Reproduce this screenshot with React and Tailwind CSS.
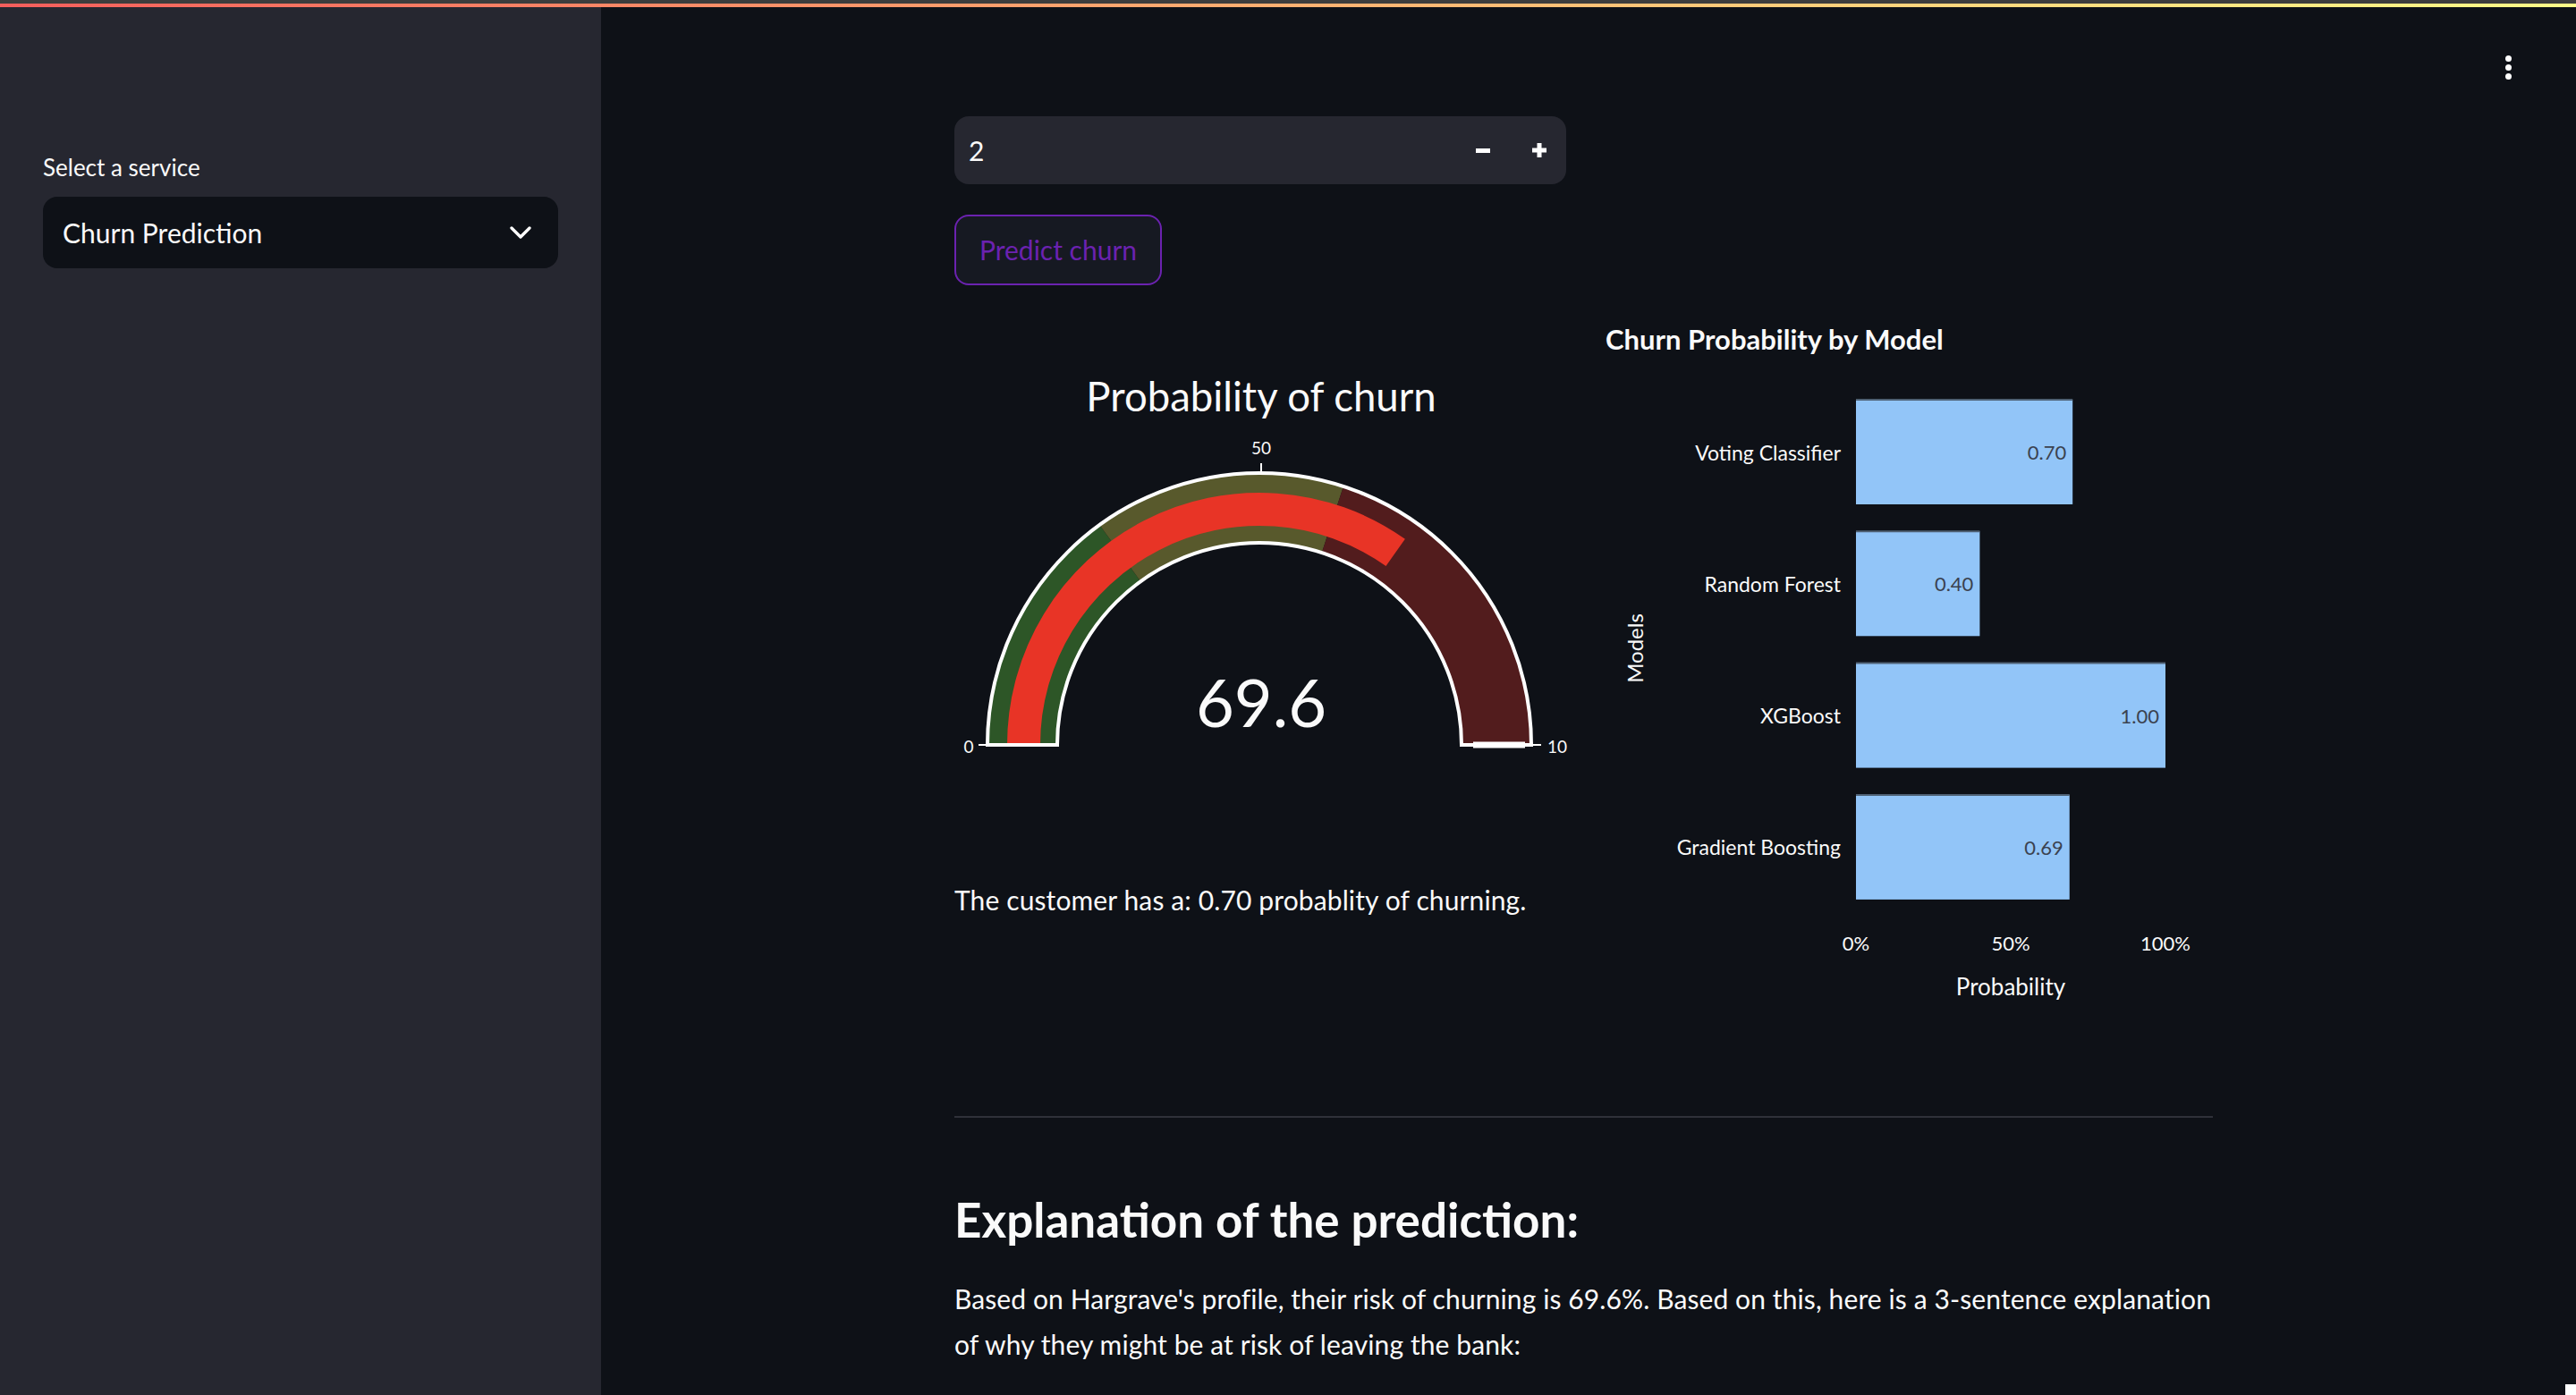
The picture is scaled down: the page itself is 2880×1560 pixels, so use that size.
import { ChevronDown } from "lucide-react";

const MODELS = [
  ["Voting Classifier", 0.7],
  ["Random Forest", 0.4],
  ["XGBoost", 1.0],
  ["Gradient Boosting", 0.69],
];

// gauge geometry (svg units = screen px)
const CX = 341;
const CY = 482;

function pt(v, r) {
  const a = Math.PI * (1 - v / 100);
  return [CX + r * Math.cos(a), CY - r * Math.sin(a)];
}

function band(v0, v1, r0, r1) {
  const [x0, y0] = pt(v0, r1);
  const [x1, y1] = pt(v1, r1);
  const [x2, y2] = pt(v1, r0);
  const [x3, y3] = pt(v0, r0);
  return `M${x0} ${y0} A${r1} ${r1} 0 0 1 ${x1} ${y1} L${x2} ${y2} A${r0} ${r0} 0 0 0 ${x3} ${y3} Z`;
}

function Gauge({ value }) {
  const [tx0, ty0] = pt(100, 239);
  const [tx1, ty1] = pt(100, 297);
  return (
    <svg width="688" height="600" viewBox="0 0 688 600" className="block">
      <text x="343" y="109" textAnchor="middle" fontSize="45.5" fill="#fafafa">
        Probability of churn
      </text>
      <path d={band(0, 30, 226, 304)} fill="#2d5627" />
      <path d={band(30, 60, 226, 304)} fill="#58592c" />
      <path d={band(60, 100, 226, 304)} fill="#521c1d" />
      <path d={band(0, value, 245, 282)} fill="#e83426" />
      <path d={band(0, 100, 226, 304)} fill="none" stroke="#ffffff" strokeWidth="4" />
      <line x1={tx0} y1={ty0} x2={tx1} y2={ty1} stroke="#ffffff" strokeWidth="7" />
      <line x1="27" y1={CY} x2="37" y2={CY} stroke="#ffffff" strokeWidth="2" />
      <line x1="645" y1={CY} x2="656" y2={CY} stroke="#ffffff" strokeWidth="2" />
      <line x1="343" y1="167" x2="343" y2="178" stroke="#ffffff" strokeWidth="2" />
      <text x="16" y="491" textAnchor="middle" fontSize="19" fill="#fafafa">0</text>
      <text x="343" y="157" textAnchor="middle" fontSize="19" fill="#fafafa">50</text>
      <text x="663" y="491" fontSize="19" fill="#fafafa">10</text>
      <text x="343" y="462" textAnchor="middle" fontSize="74" fill="#fafafa">
        {value}
      </text>
    </svg>
  );
}

function ModelChart() {
  const X0 = 288;
  const W = 346;
  return (
    <svg width="687" height="790" viewBox="0 0 687 790" className="block">
      <text x="8" y="40" fontSize="31" fontWeight="700" fill="#fafafa">
        Churn Probability by Model
      </text>
      {MODELS.map(([name, v], i) => {
        const y = 96 + i * 147.3;
        const w = W * v;
        return (
          <g key={name}>
            <rect x={X0} y={y} width={w} height="117" fill="#92c5f8" />
            <line x1={X0} y1={y} x2={X0 + w} y2={y} stroke="#4f6174" strokeWidth="2" />
            <text x="271" y={y + 58.5} textAnchor="end" dominantBaseline="central" fontSize="23" fill="#fafafa">
              {name}
            </text>
            <text x={X0 + w - 7} y={y + 58.5} textAnchor="end" dominantBaseline="central" fontSize="22" fill="#3b4250">
              {v.toFixed(2)}
            </text>
          </g>
        );
      })}
      <text x={X0} y="712" textAnchor="middle" fontSize="22" fill="#fafafa">0%</text>
      <text x={X0 + W / 2} y="712" textAnchor="middle" fontSize="22" fill="#fafafa">50%</text>
      <text x={X0 + W} y="712" textAnchor="middle" fontSize="22" fill="#fafafa">100%</text>
      <text x={X0 + W / 2} y="762" textAnchor="middle" fontSize="26" fill="#fafafa">Probability</text>
      <text
        x="40"
        y="374"
        textAnchor="middle"
        dominantBaseline="central"
        fontSize="24"
        fill="#fafafa"
        transform="rotate(-90 40 374)"
      >
        Models
      </text>
    </svg>
  );
}

function NumberInput() {
  return (
    <div className="flex h-[76px] w-[684px] items-center rounded-[16px] bg-[#262730] pl-4 pr-[22px]">
      <span className="flex-1 text-[30px] text-[#fafafa]">2</span>
      <div className="flex items-center gap-[47px]">
        <span className="block h-[5px] w-[16px] bg-white" />
        <svg width="16" height="16" viewBox="0 0 16 16" className="block">
          <rect x="5.5" y="0" width="5" height="16" fill="#fff" />
          <rect x="0" y="5.5" width="16" height="5" fill="#fff" />
        </svg>
      </div>
    </div>
  );
}

export default function App() {
  return (
    <div className="relative flex h-[1560px] w-full flex-col overflow-hidden bg-[#0e1117] font-['Lato',sans-serif] text-[#fafafa]">
      <div className="h-[4px] bg-[#3d3d3d]" />
      <div className="h-[4px] bg-linear-to-r from-[#f55e5c] to-[#fdfb88]" />
      <div className="flex flex-1">
        <aside className="w-[672px] shrink-0 bg-[#262730] px-[48px] pt-[158px]">
          <div className="text-[26px] leading-[42px]">Select a service</div>
          <div className="mt-[12px] flex h-[80px] items-center justify-between rounded-[16px] bg-[#0e1117] pl-[22px] pr-[22px]">
            <span className="text-[30px]">Churn Prediction</span>
            <ChevronDown size={40} strokeWidth={2} className="text-white" />
          </div>
        </aside>

        <main className="relative flex-1">
          <div className="absolute right-[72px] top-[54px] flex flex-col gap-[3px]">
            <span className="size-[7px] rounded-full bg-white" />
            <span className="size-[7px] rounded-full bg-white" />
            <span className="size-[7px] rounded-full bg-white" />
          </div>

          <div className="ml-[395px] w-[1407px] pt-[122px]">
            <NumberInput />
            <button className="mt-[34px] flex h-[79px] w-[232px] items-center justify-center rounded-[16px] border-2 border-[#6b22b0] bg-[#161922] text-[30px] text-[#6b22b0]">
              Predict churn
            </button>

            <div className="mt-[32px] grid grid-cols-2 gap-8">
              <div>
                <Gauge value={69.6} />
                <p className="mt-[30px] text-[30px] leading-[51px] tracking-[0.12px]">
                  The customer has a: 0.70 probablity of churning.
                </p>
              </div>
              <div>
                <ModelChart />
              </div>
            </div>

            <hr className="mt-[107px] border-0 border-t-2 border-[#2f3139]" />

            <h3 className="mt-[80px] text-[53px] font-bold leading-[67px]">Explanation of the prediction:</h3>
            <p className="mt-[30px] text-[30px] leading-[51px] tracking-[0.1px]">
              <span className="whitespace-nowrap">
                Based on Hargrave's profile, their risk of churning is 69.6%. Based on this, here is a 3-sentence
                explanation
              </span>
              <br />
              of why they might be at risk of leaving the bank:
            </p>
          </div>
        </main>
      </div>
      <div className="absolute bottom-0 right-0 size-[12px] bg-white" />
    </div>
  );
}
